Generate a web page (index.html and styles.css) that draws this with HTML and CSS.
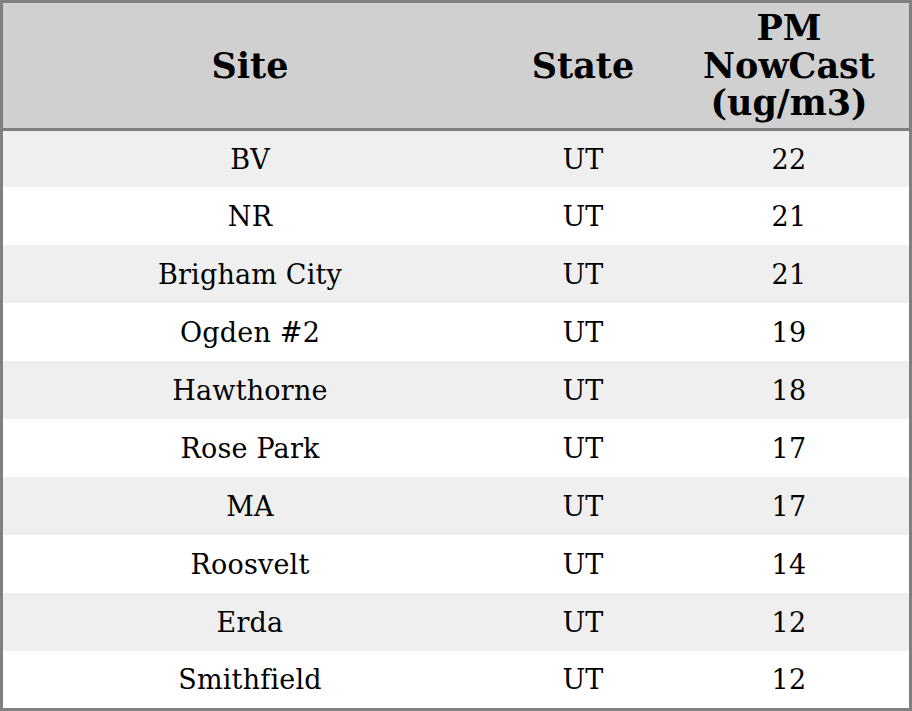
FILE: index.html
```html
<!DOCTYPE html>
<html>
<head>
<meta charset="utf-8">
<link rel="stylesheet" href="styles.css">
</head>
<body>
<table class="tbl">
  <colgroup>
    <col class="c-site"><col class="c-state"><col class="c-pm">
  </colgroup>
  <thead>
    <tr><th>Site</th><th>State</th><th>PM<br>NowCast<br>(ug/m3)</th></tr>
  </thead>
  <tbody>
    <tr><td>BV</td><td>UT</td><td>22</td></tr>
    <tr><td>NR</td><td>UT</td><td>21</td></tr>
    <tr><td>Brigham City</td><td>UT</td><td>21</td></tr>
    <tr><td>Ogden #2</td><td>UT</td><td>19</td></tr>
    <tr><td>Hawthorne</td><td>UT</td><td>18</td></tr>
    <tr><td>Rose Park</td><td>UT</td><td>17</td></tr>
    <tr><td>MA</td><td>UT</td><td>17</td></tr>
    <tr><td>Roosvelt</td><td>UT</td><td>14</td></tr>
    <tr><td>Erda</td><td>UT</td><td>12</td></tr>
    <tr><td>Smithfield</td><td>UT</td><td>12</td></tr>
  </tbody>
</table>
</body>
</html>
```
FILE: styles.css
```css
html, body { margin: 0; padding: 0; background: #fff; }
.tbl {
  width: 912px;
  height: 711px;
  border-collapse: separate;
  border-spacing: 0;
  border: 3px solid #808080;
  font-family: "DejaVu Serif", serif;
  color: #000;
  table-layout: fixed;
  box-sizing: border-box;
}
.c-site { width: 494px; }
.c-state { width: 172px; }
.c-pm { width: 240px; }
.tbl th {
  background: #d0d0d0;
  font-size: 35px;
  font-weight: bold;
  line-height: 37.5px;
  height: 125px;
  padding: 0;
  border-bottom: 3px solid #808080;
  text-align: center;
  vertical-align: middle;
}
.tbl td {
  font-size: 27px;
  height: 58px;
  padding: 0;
  text-align: center;
  vertical-align: middle;
  letter-spacing: 0.2px;
}
.tbl tbody tr:first-child td { height: 56px; }
.tbl tbody tr:last-child td { height: 57px; }
.tbl tbody tr:nth-child(odd) td { background: #efefef; }
.tbl tbody tr:nth-child(even) td { background: #fff; }
```
